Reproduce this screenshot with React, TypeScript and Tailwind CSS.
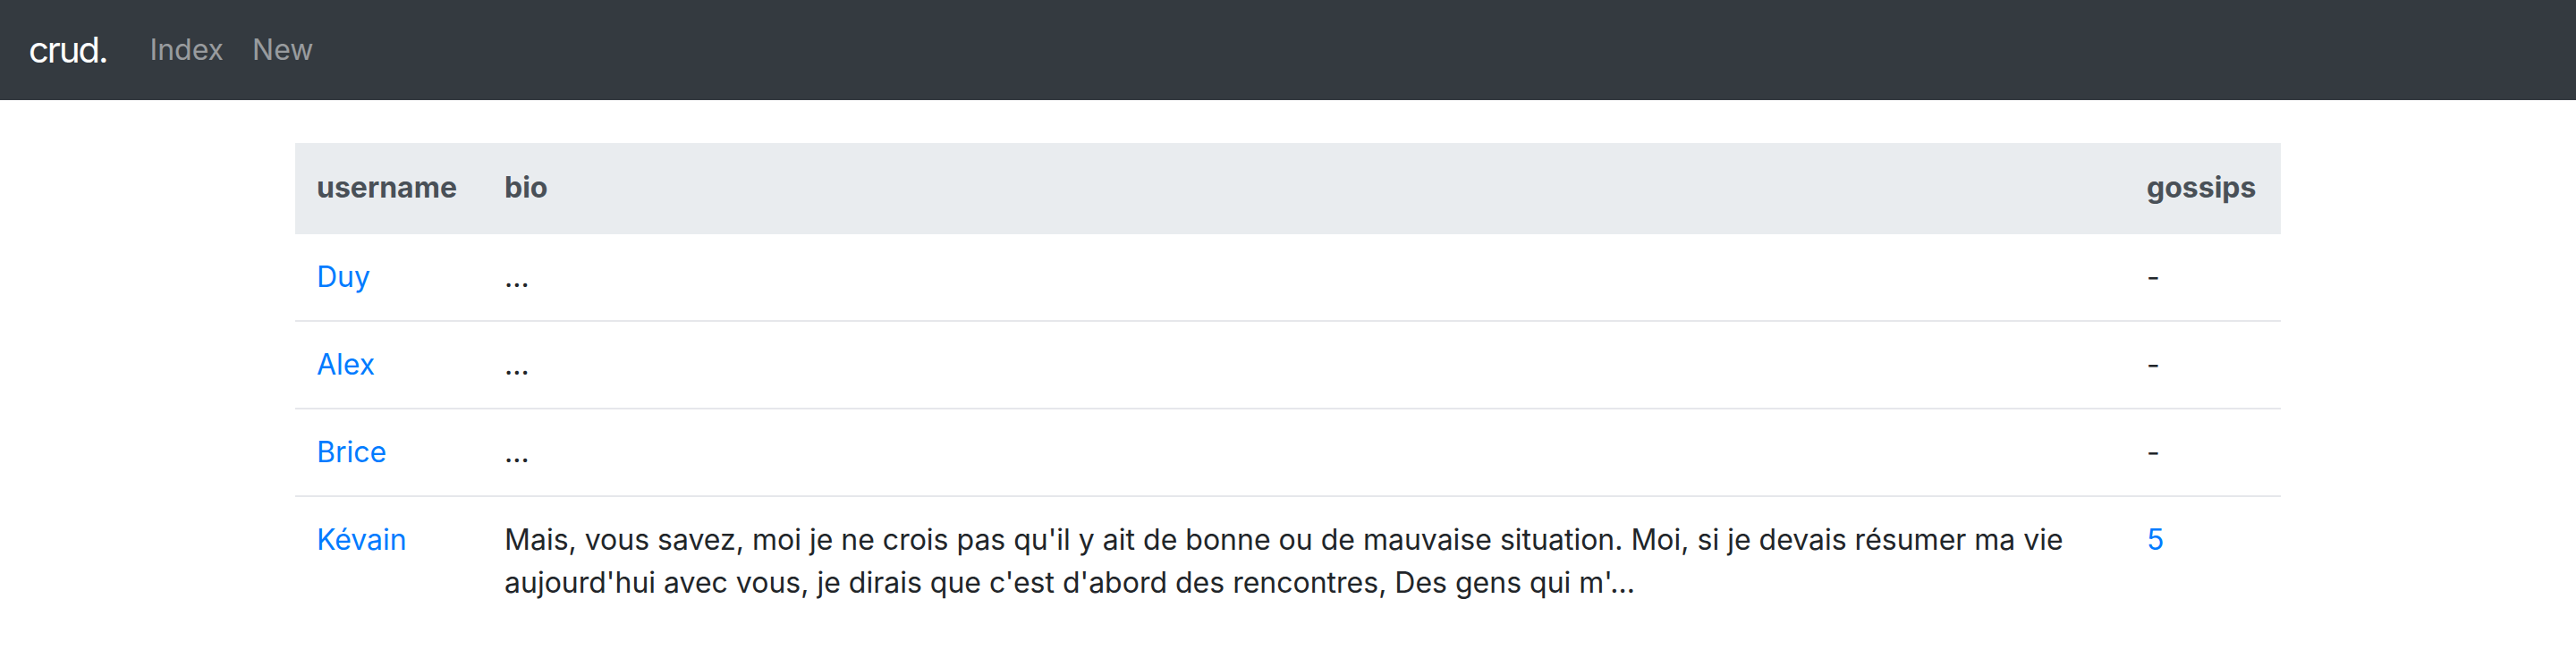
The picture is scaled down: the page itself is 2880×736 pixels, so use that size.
import React from "react";

const rows = [
  { name: "Duy", bio: "...", gossips: "-" },
  { name: "Alex", bio: "...", gossips: "-" },
  { name: "Brice", bio: "...", gossips: "-" },
  {
    name: "Kévain",
    bio: "Mais, vous savez, moi je ne crois pas qu'il y ait de bonne ou de mauvaise situation. Moi, si je devais résumer ma vie aujourd'hui avec vous, je dirais que c'est d'abord des rencontres, Des gens qui m'...",
    gossips: "5",
  },
];

export default function App() {
  return (
    <div className="min-h-[736px] bg-white text-[#212529] font-['Inter','Noto_Sans',sans-serif] text-[32px] leading-[48px]">
      <nav className="h-[112px] bg-[#343a40] flex items-center px-8">
        <span className="text-white text-[40px] leading-[60px] tracking-[-2px] mr-8">crud.</span>
        <a className="text-[rgba(255,255,255,0.5)] px-4">Index</a>
        <a className="text-[rgba(255,255,255,0.5)] px-4">New</a>
      </nav>
      <div className="w-[2220px] mx-auto mt-12">
        <table className="w-full border-collapse">
          <thead>
            <tr className="bg-[#e9ecef] text-[#495057]">
              <th className="w-[210px] text-left font-bold p-6 border-b-4 border-t-2 border-[#e9ecef]">username</th>
              <th className="text-left font-bold p-6 border-b-4 border-t-2 border-[#e9ecef]">bio</th>
              <th className="w-[174px] text-left font-bold p-6 border-b-4 border-t-2 border-[#e9ecef]">gossips</th>
            </tr>
          </thead>
          <tbody>
            {rows.map((r, i) => (
              <tr key={r.name} className={i > 0 ? "border-t-2 border-[#e6e7eb]" : ""}>
                <td className="p-6 align-top text-[#007bff]">{r.name}</td>
                <td className="p-6 align-top">{r.bio}</td>
                <td className={"p-6 align-top " + (r.gossips === "5" ? "text-[#007bff]" : "")}>{r.gossips}</td>
              </tr>
            ))}
          </tbody>
        </table>
      </div>
    </div>
  );
}
